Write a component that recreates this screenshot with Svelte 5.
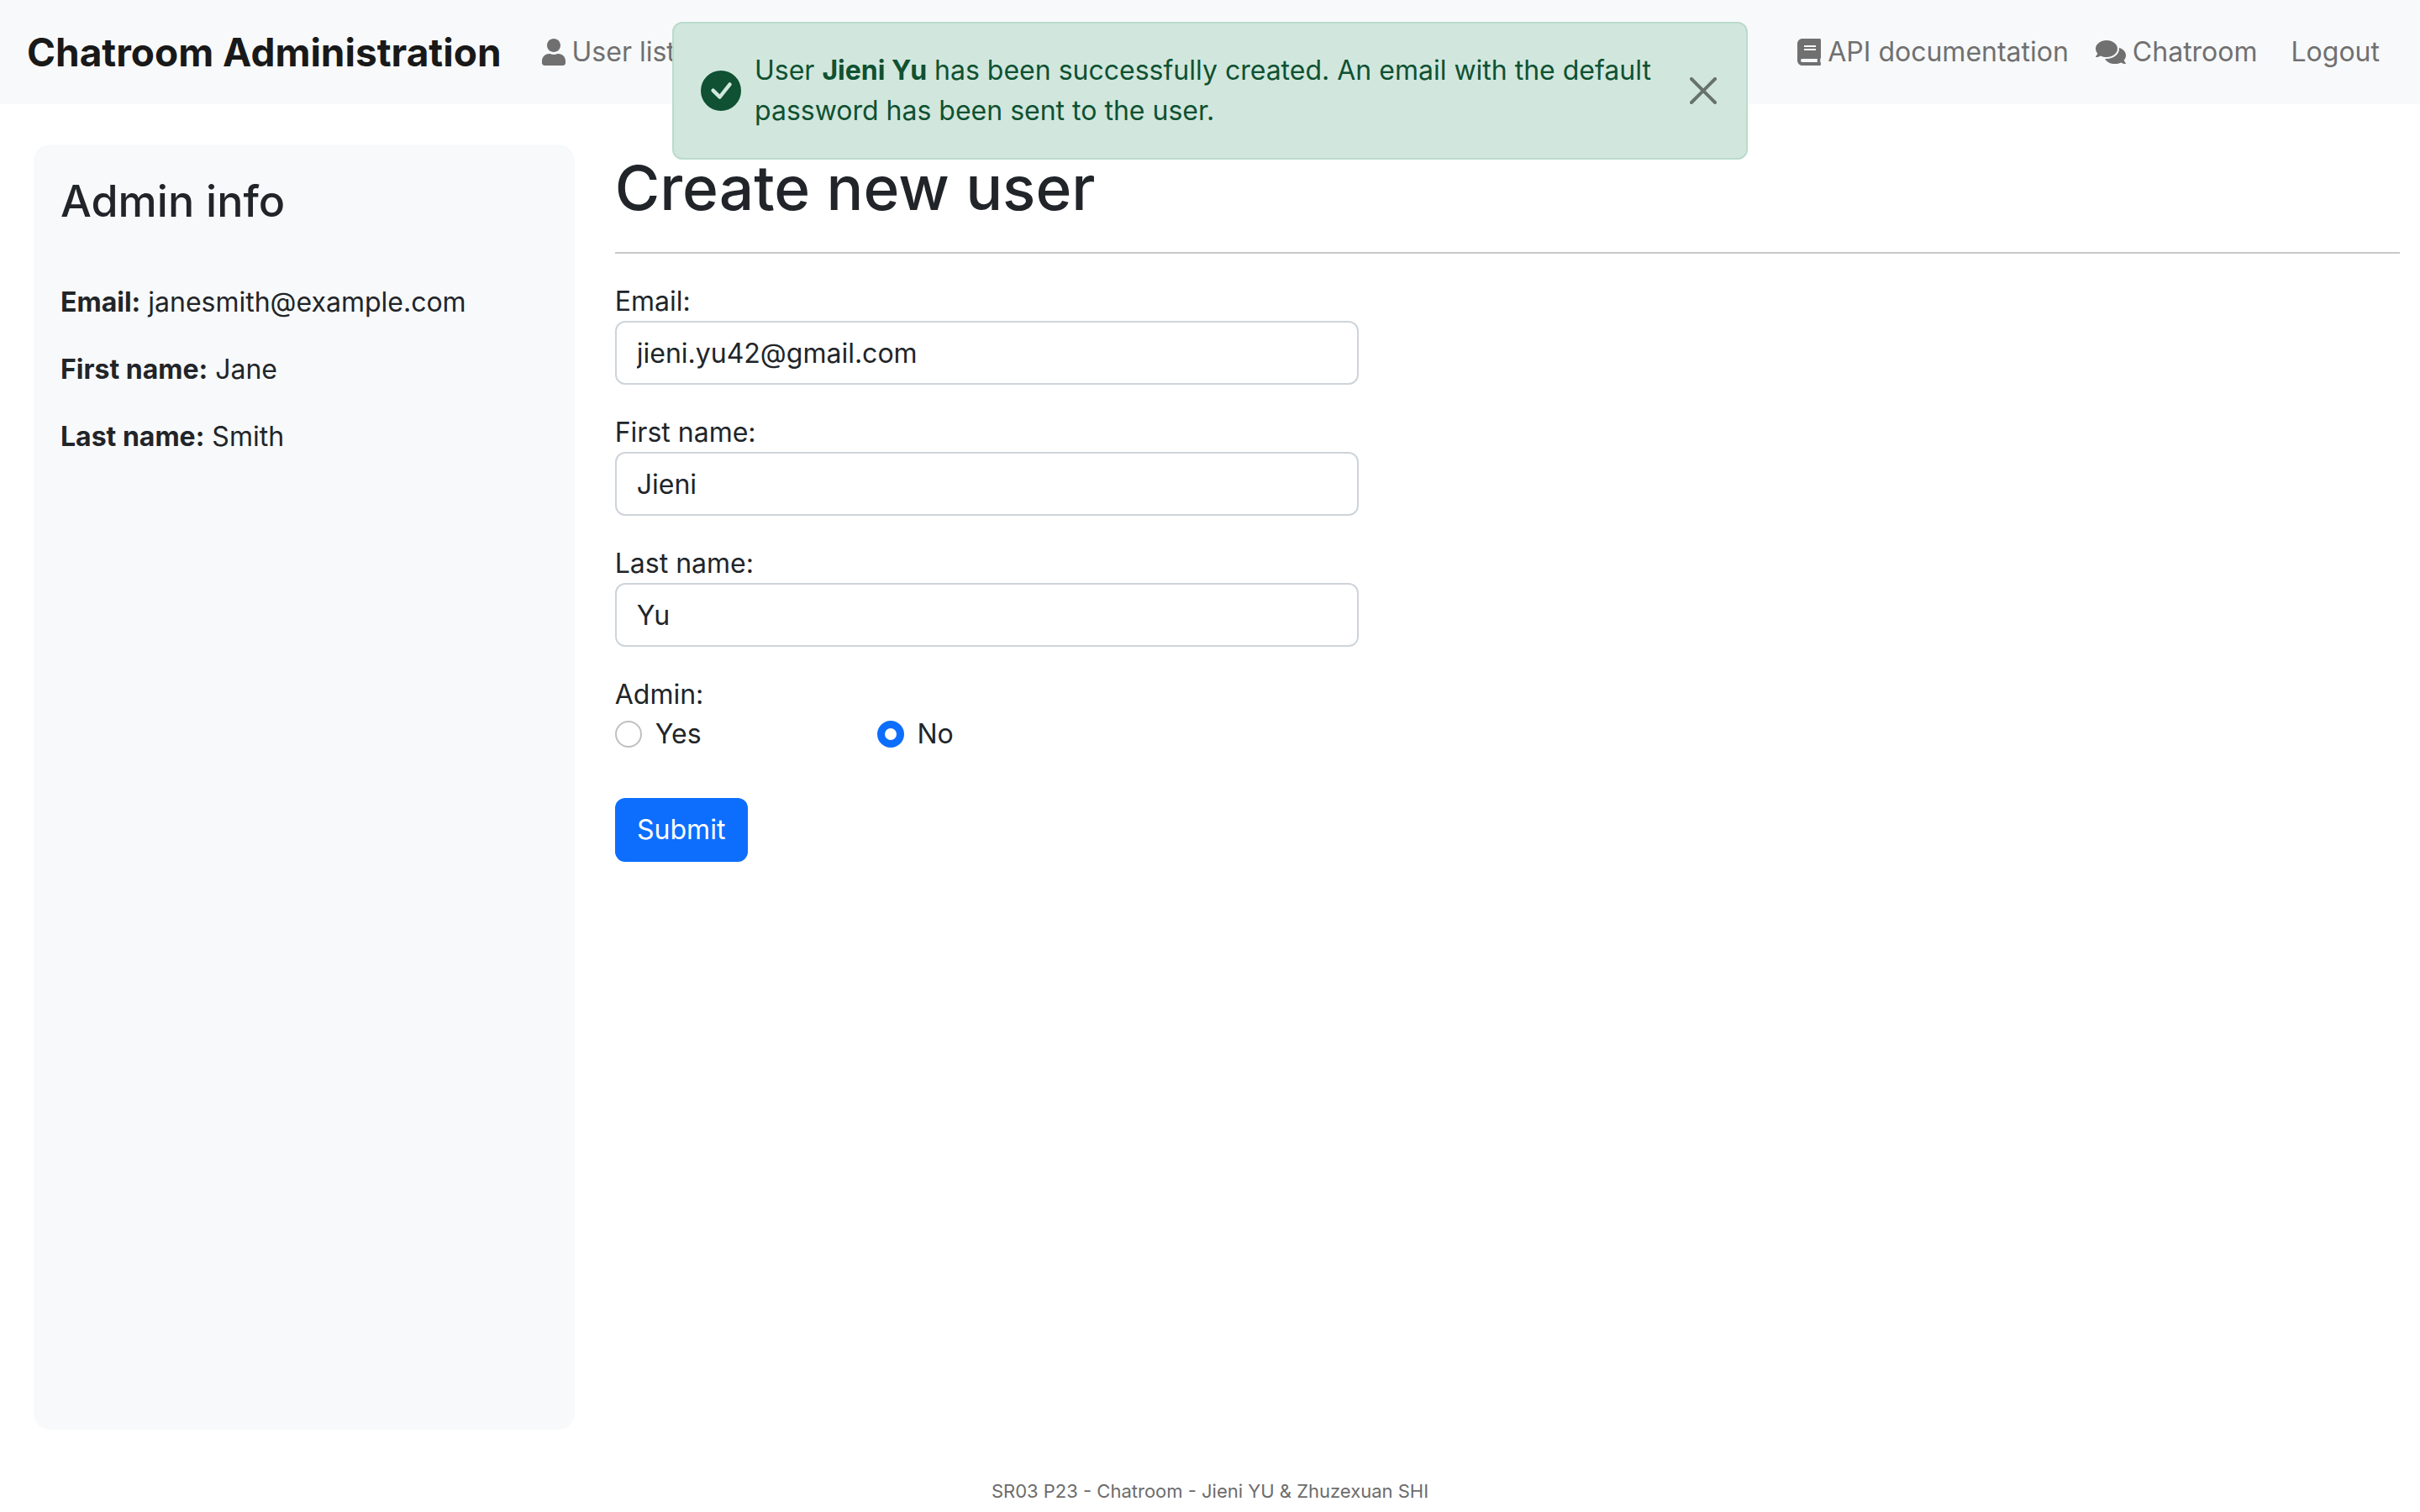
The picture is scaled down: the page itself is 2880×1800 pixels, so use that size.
<script>
  let email = $state('jieni.yu42@gmail.com');
  let firstName = $state('Jieni');
  let lastName = $state('Yu');
  let isAdmin = $state('no');
  let alertOpen = $state(true);
</script>

<div class="page">
  <nav class="navbar">
    <a class="brand" href="#home">Chatroom Administration</a>
    <a class="nav-link" href="#users">
      <svg class="icon" viewBox="0 0 448 512" width="28" height="32" aria-hidden="true"><path d="M224 256c70.7 0 128-57.3 128-128S294.7 0 224 0 96 57.3 96 128s57.3 128 128 128zm89.6 32h-16.7c-22.2 10.2-46.9 16-72.9 16s-50.6-5.8-72.9-16h-16.7C60.2 288 0 348.2 0 422.4V464c0 26.5 21.5 48 48 48h352c26.5 0 48-21.5 48-48v-41.6c0-74.2-60.2-134.4-134.4-134.4z" /></svg>
      User list
    </a>
    <div class="nav-right">
      <a class="nav-link" href="#api">
        <svg class="icon" viewBox="0 0 448 512" width="28" height="32" aria-hidden="true"><path d="M448 360V24c0-13.3-10.7-24-24-24H96C43 0 0 43 0 96v320c0 53 43 96 96 96h328c13.3 0 24-10.7 24-24v-16c0-7.5-3.5-14.3-8.9-18.7-4.2-15.4-4.2-59.3 0-74.7 5.4-4.3 8.9-11.1 8.9-18.6zM128 134c0-3.3 2.7-6 6-6h212c3.3 0 6 2.7 6 6v20c0 3.3-2.7 6-6 6H134c-3.3 0-6-2.7-6-6v-20zm0 64c0-3.3 2.7-6 6-6h212c3.3 0 6 2.7 6 6v20c0 3.3-2.7 6-6 6H134c-3.3 0-6-2.7-6-6v-20zm253.4 250H96c-17.7 0-32-14.3-32-32 0-17.6 14.3-32 32-32h285.4c-1.9 17.1-1.9 46.9 0 64z" /></svg>
        API documentation
      </a>
      <a class="nav-link" href="#chatroom">
        <svg class="icon" viewBox="0 0 576 512" width="36" height="32" aria-hidden="true"><path d="M416 192c0-88.4-93.1-160-208-160S0 103.6 0 192c0 34.3 14.1 65.9 38 92-13.4 30.2-35.5 54.2-35.8 54.5-2.2 2.3-2.8 5.7-1.5 8.7S4.8 352 8 352c36.6 0 66.9-12.3 88.7-25 32.2 15.7 70.3 25 111.3 25 114.9 0 208-71.6 208-160zm122 220c23.9-26 38-57.7 38-92 0-66.9-53.5-124.2-129.3-148.1.9 6.6 1.3 13.3 1.3 20.1 0 105.9-107.7 192-240 192-10.8 0-21.3-.8-31.7-1.9C207.8 439.6 281.8 480 368 480c41 0 79.1-9.2 111.3-25 21.8 12.7 52.1 25 88.7 25 3.2 0 6.1-1.9 7.3-4.8 1.3-2.9.7-6.3-1.5-8.7-.3-.2-22.4-24.2-35.8-54.5z" /></svg>
        Chatroom
      </a>
      <a class="nav-link logout" href="#logout">Logout</a>
    </div>
  </nav>

  {#if alertOpen}
    <div class="alert" role="alert">
      <svg class="check" viewBox="0 0 16 16" width="48" height="48" aria-hidden="true"><path d="M16 8A8 8 0 1 1 0 8a8 8 0 0 1 16 0zm-3.97-3.03a.75.75 0 0 0-1.08.022L7.477 9.417 5.384 7.323a.75.75 0 0 0-1.06 1.06L6.97 11.03a.75.75 0 0 0 1.079-.02l3.992-4.99a.75.75 0 0 0-.01-1.05z" /></svg>
      <p class="message">
        User <strong>Jieni Yu</strong> has been successfully created. An email with the default password has been sent to the user.
      </p>
      <button class="close" type="button" aria-label="Close" onclick={() => (alertOpen = false)}>
        <svg viewBox="0 0 16 16" width="32" height="32" aria-hidden="true"><path d="M.293.293a1 1 0 0 1 1.414 0L8 6.586 14.293.293a1 1 0 1 1 1.414 1.414L9.414 8l6.293 6.293a1 1 0 0 1-1.414 1.414L8 9.414l-6.293 6.293a1 1 0 0 1-1.414-1.414L6.586 8 .293 1.707a1 1 0 0 1 0-1.414z" /></svg>
      </button>
    </div>
  {/if}

  <div class="body">
    <aside class="sidebar">
      <h2>Admin info</h2>
      <p><strong>Email:</strong> janesmith@example.com</p>
      <p><strong>First name:</strong> Jane</p>
      <p><strong>Last name:</strong> Smith</p>
    </aside>

    <main>
      <h1>Create new user</h1>
      <hr />
      <form onsubmit={(event) => event.preventDefault()}>
        <div class="field">
          <label for="email">Email:</label>
          <input id="email" class="text-input" type="email" bind:value={email} />
        </div>
        <div class="field">
          <label for="first-name">First name:</label>
          <input id="first-name" class="text-input" type="text" bind:value={firstName} />
        </div>
        <div class="field">
          <label for="last-name">Last name:</label>
          <input id="last-name" class="text-input" type="text" bind:value={lastName} />
        </div>
        <fieldset>
          <legend>Admin:</legend>
          <div class="choices">
            <label class="choice"><input type="radio" name="admin" value="yes" bind:group={isAdmin} />Yes</label>
            <label class="choice"><input type="radio" name="admin" value="no" bind:group={isAdmin} />No</label>
          </div>
        </fieldset>
        <button class="submit" type="submit">Submit</button>
      </form>
    </main>
  </div>

  <footer>SR03 P23 - Chatroom - Jieni YU &amp; Zhuzexuan SHI</footer>
</div>

<style>
  :global(body) {
    margin: 0;
    background: #fff;
  }

  .page,
  .page * {
    box-sizing: border-box;
  }

  .page {
    display: flex;
    flex-direction: column;
    min-height: 100vh;
    color: #212529;
    font-family: Inter, 'Liberation Sans', sans-serif;
    font-size: 32px;
    line-height: 48px;
  }

  .navbar {
    display: flex;
    align-items: center;
    height: 124px;
    padding: 0 32px;
    background: #f8f9fa;
  }

  .brand {
    margin-right: 32px;
    color: #191919;
    font-size: 46px;
    font-weight: 700;
    line-height: 72px;
    text-decoration: none;
    white-space: nowrap;
  }

  .nav-link {
    display: flex;
    align-items: center;
    gap: 8px;
    padding: 0 16px;
    color: #707070;
    text-decoration: none;
    white-space: nowrap;
  }

  .nav-right {
    display: flex;
    margin-left: auto;
  }

  .logout {
    margin-left: 8px;
  }

  .icon,
  .check {
    flex: none;
    fill: currentColor;
  }

  .alert {
    position: absolute;
    top: 26px;
    left: 0;
    right: 0;
    display: flex;
    align-items: center;
    max-width: 1280px;
    margin: 0 auto;
    padding: 32px;
    border: 2px solid #badbcc;
    border-radius: 12px;
    background: #d1e7dd;
    color: #0f5132;
  }

  .message {
    flex: 1;
    margin: 0 32px 0 16px;
  }

  strong {
    font-weight: 700;
  }

  .close {
    display: flex;
    padding: 3px;
    border: 0;
    background: none;
    opacity: 0.5;
    cursor: pointer;
  }

  .body {
    display: grid;
    flex: 1;
    grid-template-columns: 10fr 33fr;
    gap: 48px;
    padding: 48px 24px 48px 40px;
  }

  .sidebar {
    padding: 32px;
    border-radius: 20px;
    background: #f8f9fa;
  }

  h2 {
    margin: 0 0 60px;
    font-size: 52px;
    font-weight: 500;
    line-height: 72px;
  }

  .sidebar p {
    margin: 0 0 32px;
  }

  h1 {
    margin: 0 0 24px;
    font-size: 73px;
    font-weight: 500;
    line-height: 104px;
  }

  hr {
    height: 2px;
    margin: 0 0 32px;
    border: 0;
    background: #c7c8c9;
  }

  form {
    width: calc(100% * 5 / 12);
  }

  .field {
    display: flex;
    flex-direction: column;
    margin-bottom: 32px;
  }

  .field label,
  legend {
    padding: 2px 0 0;
    line-height: 46px;
  }

  .text-input {
    width: 100%;
    height: 76px;
    padding: 0 24px;
    border: 2px solid #ced4da;
    border-radius: 12px;
    background: #fff;
    color: #212529;
    font: inherit;
  }

  fieldset {
    margin: 0 0 52px;
    padding: 0;
    border: 0;
  }

  .choices {
    display: flex;
    gap: 2px;
  }

  .choice {
    display: flex;
    align-items: center;
    gap: 16px;
    width: 35%;
  }

  .choice input {
    width: 32px;
    height: 32px;
    margin: 0;
    border: 2px solid #bfbfbf;
    border-radius: 50%;
    background: #fff;
    appearance: none;
  }

  .choice input:checked {
    border: 9px solid #0d6efd;
  }

  .submit {
    min-width: 158px;
    height: 76px;
    padding: 0 26px;
    border: 0;
    border-radius: 12px;
    background: #0d6efd;
    color: #fff;
    font: inherit;
    cursor: pointer;
  }

  footer {
    padding: 8px;
    color: #6c6c6c;
    font-size: 22px;
    line-height: 34px;
    text-align: center;
  }
</style>
